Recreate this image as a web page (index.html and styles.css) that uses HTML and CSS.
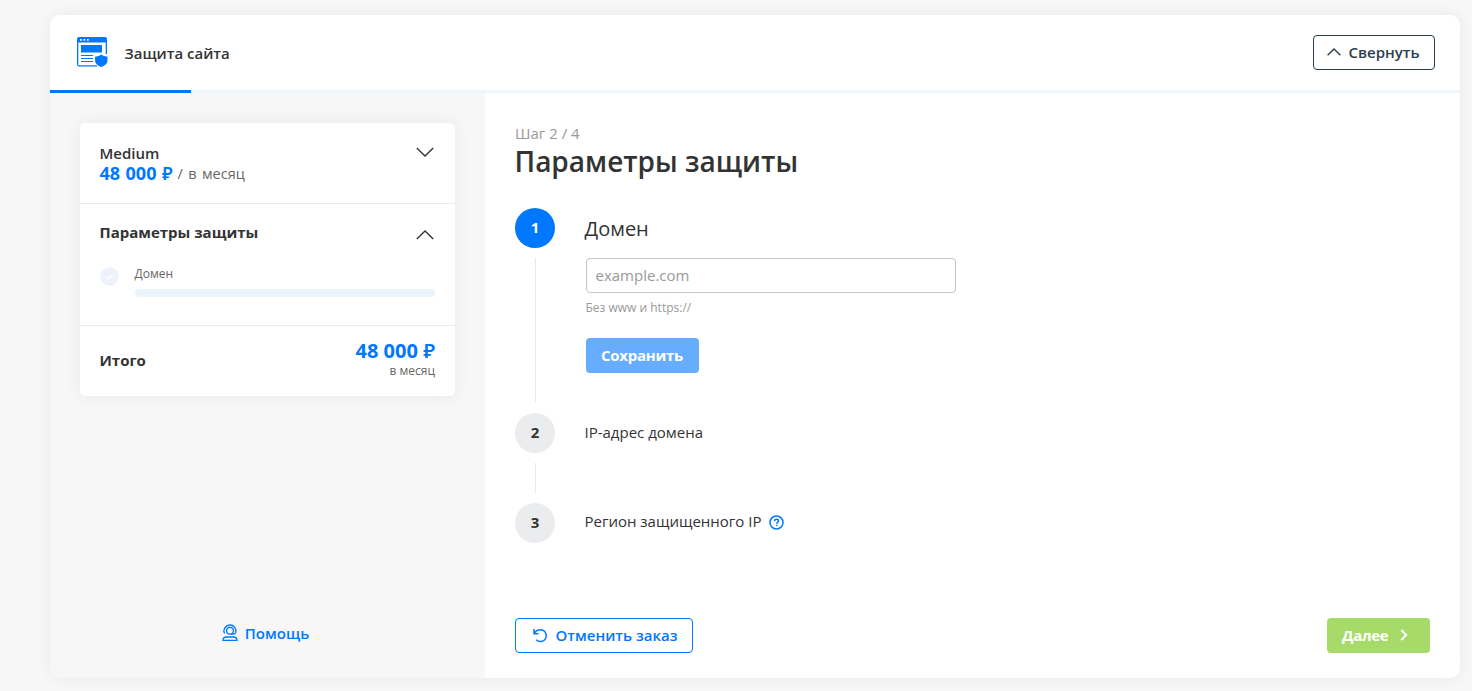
FILE: index.html
```
<!DOCTYPE html>
<html lang="ru">

<head>
    <meta charset="UTF-8">
    <meta name="viewport" content="width=device-width, initial-scale=1.0">
    <title>Защита сайта</title>
    <link rel="stylesheet" href="styles.css">
</head>

<body>
    <div class="order">
        <header class="order-header">
            <svg class="order-logo" width="32" height="32" viewBox="0 0 32 32">
                <path d="M2 0h26a2 2 0 0 1 2 2v15h-1.300V5.500H1.300v22.700H20v1.300H2a2 2 0 0 1-2-2V2a2 2 0 0 1 2-2z" fill="#0077ff" />
                <path d="M3 2h1.700v1.700H3zM6.500 2h1.700v1.700H6.500zM10 2h1.700v1.700H10z" fill="#fff" />
                <path d="M4 8h21v7.500H4zM4 18h12v1H4zM4 21h12v1H4zM4 24h12v1H4z" fill="#0077ff" />
                <path d="M24.300 17.500c2 1.500 4 2 6.200 2v4c0 3.500-3 5.300-6.200 6.500-3.200-1.200-6.200-3-6.200-6.500v-4c2.200 0 4.200-.5 6.200-2z" fill="#0077ff" />
            </svg>
            <h1 class="order-title">Защита сайта</h1>
            <button class="btn btn-dark">
                <svg width="14" height="8" viewBox="0 0 14 8"><path d="M.6 7.300L7 1l6.400 6.300" /></svg>
                Свернуть
            </button>
        </header>
        <div class="progress">
            <div class="progress-bar" style="width: 10%"></div>
        </div>

        <div class="order-body">
            <aside class="sidebar">
                <div class="summary">
                    <div class="summary-plan">
                        <div>
                            <div class="plan-name">Medium</div>
                            <div class="plan-price">
                                <b>48 000 <span class="rub">₽</span></b>
                                <span>/ в месяц</span>
                            </div>
                        </div>
                        <svg class="chevron" width="18" height="10" viewBox="0 0 18 10"><path d="M.8 1L9 9l8.200-8" /></svg>
                    </div>
                    <div class="summary-params">
                        <div class="params-head">
                            Параметры защиты
                            <svg class="chevron" width="18" height="10" viewBox="0 0 18 10"><path d="M.8 9L9 1l8.200 8" /></svg>
                        </div>
                        <div class="param">
                            <svg class="param-check" width="19" height="19" viewBox="0 0 19 19">
                                <circle cx="9.500" cy="9.500" r="9.300" fill="#ecf1fa" />
                                <path d="M6 9.700l2.400 2.400 4.800-4.800" fill="none" stroke="#fff" stroke-width="1.500" />
                            </svg>
                            <div class="param-info">
                                <div class="param-name">Домен</div>
                                <div class="param-line"></div>
                            </div>
                        </div>
                    </div>
                    <div class="summary-total">
                        <b class="total-label">Итого</b>
                        <div class="total-sum">
                            <div class="total-price">48 000 <span class="rub">₽</span></div>
                            <div class="total-period">в месяц</div>
                        </div>
                    </div>
                </div>
                <a class="help" href="#">
                    <svg width="16" height="18" viewBox="0 0 16 18">
                        <path d="M2.500 9.500A6 6 0 1 1 13.700 8.700c-.5 1-1.200 1.300-2.200 1.300H9" />
                        <circle cx="8" cy="6.800" r="3.400" />
                        <path d="M1 16.400c0-2.300 1.200-3.400 3.500-3.400h7c2.300 0 3.500 1.100 3.500 3.400z" />
                    </svg>
                    Помощь
                </a>
            </aside>

            <main class="content">
                <div class="step-count">Шаг 2 / 4</div>
                <h2 class="content-title">Параметры защиты</h2>

                <div class="steps">
                    <div class="step active">
                        <div class="step-mark">
                            <span class="step-circle">1</span>
                            <span class="step-line"></span>
                        </div>
                        <div class="step-body">
                            <div class="step-name">Домен</div>
                            <input class="field" type="text" placeholder="example.com">
                            <div class="hint">Без www и https://</div>
                            <button class="btn btn-save">Сохранить</button>
                        </div>
                    </div>
                    <div class="step">
                        <div class="step-mark">
                            <span class="step-circle">2</span>
                            <span class="step-line"></span>
                        </div>
                        <div class="step-body">
                            <div class="step-name">IP-адрес домена</div>
                        </div>
                    </div>
                    <div class="step">
                        <div class="step-mark">
                            <span class="step-circle">3</span>
                        </div>
                        <div class="step-body">
                            <div class="step-name with-tip">
                                Регион защищенного IP
                                <svg width="15" height="15" viewBox="0 0 15 15">
                                    <circle cx="7.500" cy="7.500" r="6.500" />
                                    <path d="M5.500 6.200c0-1.300.9-1.900 2-1.900s2 .6 2 1.700c0 1.300-1.900 1.300-1.900 2.700M7.600 9.800v1.300" />
                                </svg>
                            </div>
                        </div>
                    </div>
                </div>

                <div class="actions">
                    <button class="btn btn-cancel">
                        <svg width="15" height="15" viewBox="0 0 15 15"><path d="M1 1v4.800h4.500M1.300 5.500C2.500 3 4.700 1.700 7.500 1.700a5.900 5.900 0 1 1-4.300 10" /></svg>
                        Отменить заказ
                    </button>
                    <button class="btn btn-next">
                        Далее
                        <svg width="8" height="12" viewBox="0 0 8 12"><path d="M1.200 1l5 5-5 5" /></svg>
                    </button>
                </div>
            </main>
        </div>
    </div>
</body>

</html>
```
FILE: styles.css
```
* {
    box-sizing: border-box;
}

body {
    margin: 0;
    padding: 15px 12px 13px 50px;
    height: 691px;
    background: #f7f7f7;
    color: #333;
    font-family: "Open Sans", sans-serif;
    font-size: 15px;
    line-height: 20px;
}

svg {
    flex: none;
    fill: none;
}

.order {
    display: flex;
    flex-direction: column;
    height: 663px;
    background: #fff;
    border-radius: 10px;
    box-shadow: 0 0 15px rgba(0, 0, 0, 0.06);
    overflow: hidden;
}

.order-header {
    display: flex;
    align-items: center;
    height: 75px;
    padding: 0 25px 0 27px;
}

.order-title {
    flex: 1;
    margin: 0 0 0 15.5px;
    font-size: 15px;
    font-weight: 600;
}

.progress {
    height: 3px;
    background: #f0f5fc;
}

.progress-bar {
    height: 3px;
    background: #0077ff;
}

/* Buttons */

.btn {
    display: flex;
    align-items: center;
    height: 35px;
    padding: 0 15px 2px;
    border: none;
    border-radius: 4px;
    color: #fff;
    font-family: inherit;
    font-size: 15px;
    font-weight: 700;
    line-height: 20px;
    white-space: nowrap;
    cursor: pointer;
}

.btn-dark {
    width: 122px;
    gap: 8px;
    padding: 0 12px 2px 12.5px;
    background: #fff;
    border: 1px solid #2c3e50;
    color: #2c3e50;
    font-weight: 600;
}

.btn-dark svg {
    stroke: #2c3e50;
    stroke-width: 1.4;
}

.btn-save {
    width: 113px;
    margin-left: 1px;
    padding-left: 15.5px;
    background: #66adff;
    letter-spacing: -0.25px;
}

.btn-cancel {
    width: 178px;
    gap: 7.5px;
    padding: 0 0 2px 17px;
    background: #fff;
    border: 1px solid #0077ff;
    color: #0077ff;
    font-weight: 600;
}

.btn-cancel svg {
    margin-top: 1px;
    stroke: #0077ff;
    stroke-width: 1.5;
}

.btn-next {
    width: 103px;
    gap: 12px;
    background: #a6db6a;
    letter-spacing: -0.3px;
}

.btn-next svg {
    margin-top: 1px;
    stroke: #fff;
    stroke-width: 2;
}

/* Sidebar */

.order-body {
    display: flex;
    flex: 1;
}

.sidebar {
    display: flex;
    flex-direction: column;
    justify-content: space-between;
    width: 435px;
    padding: 30px 30px 35px;
    background: #f7f7f7;
}

.summary {
    background: #fff;
    border-radius: 5px;
    box-shadow: 0 0 15px rgba(44, 92, 140, 0.09);
}

.chevron {
    stroke: #333;
    stroke-width: 1.4;
}

.summary-plan {
    display: flex;
    justify-content: space-between;
    height: 81px;
    padding: 20px 21px 0 19.5px;
    border-bottom: 1px solid #e8ebed;
}

.summary-plan .chevron {
    margin-top: 4px;
}

.plan-name {
    font-weight: 600;
}

.plan-price {
    display: flex;
    gap: 5px;
    height: 20px;
    color: #666;
    font-size: 14.5px;
    line-height: 21px;
    word-spacing: 1.6px;
}

.plan-price b {
    color: #0077ff;
    font-size: 18px;
    line-height: 20px;
    word-spacing: 0.8px;
}

.rub {
    font-family: "Noto Sans", sans-serif;
    font-weight: 600;
    line-height: 1;
}

.summary-params {
    height: 122px;
    padding: 18px 20px 0 19.5px;
    border-bottom: 1px solid #e8ebed;
}

.params-head {
    display: flex;
    justify-content: space-between;
    align-items: center;
    padding-right: 1px;
    font-weight: 700;
}

.params-head .chevron {
    margin-top: 5px;
}

.param {
    display: flex;
    gap: 16px;
    margin-top: 22px;
}

.param-check {
    margin-top: 2.5px;
}

.param-info {
    flex: 1;
}

.param-name {
    color: #666;
    font-size: 12px;
    line-height: 20px;
}

.param-line {
    height: 8px;
    margin-top: 5px;
    border-radius: 4px;
    background: #e9f4fc;
}

.summary-total {
    display: flex;
    align-items: center;
    justify-content: space-between;
    height: 70px;
    padding: 0 20px 0 19.5px;
}

.total-label {
    padding-bottom: 2px;
}

.total-sum {
    text-align: right;
}

.total-price {
    color: #0077ff;
    font-size: 20px;
    font-weight: 700;
}

.total-period {
    color: #666;
    font-size: 12px;
}

.help {
    display: flex;
    align-items: center;
    align-self: center;
    gap: 7px;
    margin-right: 4px;
    color: #0077ff;
    font-weight: 600;
    text-decoration: none;
}

.help svg {
    stroke: #0077ff;
    stroke-width: 1.3;
}

/* Content */

.content {
    display: flex;
    flex: 1;
    flex-direction: column;
    padding: 30px 30px 25px;
}

.step-count {
    color: #999;
}

.content-title {
    margin: 0 0 0 -0.5px;
    font-size: 28px;
    font-weight: 600;
    line-height: 36px;
}

.steps {
    flex: 1;
    margin-top: 29px;
}

.step {
    display: flex;
    gap: 29.5px;
    height: 90px;
}

.step.active {
    height: 205px;
}

.step-mark {
    display: flex;
    flex-direction: column;
    align-items: center;
    width: 40px;
}

.step-circle {
    display: flex;
    align-items: center;
    justify-content: center;
    width: 40px;
    height: 40px;
    padding-bottom: 2px;
    border-radius: 50%;
    background: #ebecee;
    font-weight: 700;
}

.active .step-circle {
    background: #0077ff;
    color: #fff;
}

.step-line {
    flex: 1;
    width: 1px;
    margin: 10px 0;
    background: #e8e8e8;
}

.step-name {
    display: flex;
    align-items: center;
    gap: 7.5px;
    height: 40px;
    padding-bottom: 2px;
}

.with-tip {
    padding-bottom: 4px;
}

.step-name svg {
    margin-top: 3px;
    stroke: #0077ff;
    stroke-width: 1.5;
}

.active .step-name {
    padding: 2px 0 0;
    font-size: 20px;
}

.field {
    display: block;
    width: 370px;
    height: 35px;
    margin: 10px 0 0 1.5px;
    padding: 0 8.5px 2px;
    border: 1px solid #c2c5c8;
    border-radius: 4px;
    font-family: inherit;
    font-size: 15px;
}

.field::placeholder {
    color: #999;
}

.hint {
    margin: 5px 0 20px 1px;
    color: #999;
    font-size: 12px;
}

.actions {
    display: flex;
    justify-content: space-between;
}
```
